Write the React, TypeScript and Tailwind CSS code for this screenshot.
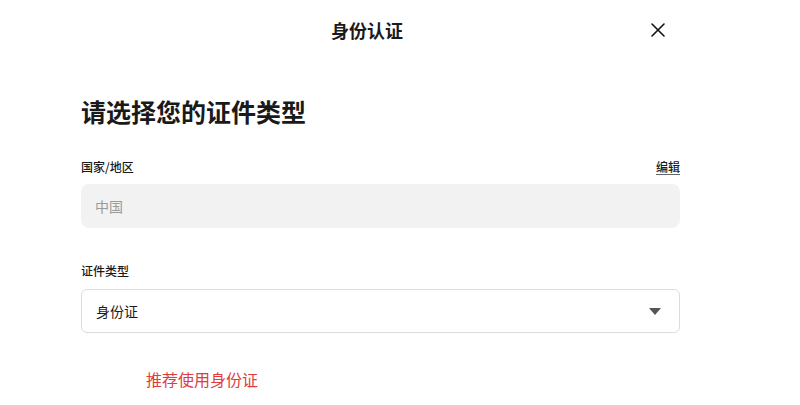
export default function App() {
  return (
    <div
      className="h-[405px] w-[800px] overflow-hidden bg-white text-[#1a1a1a]"
      style={{ fontFamily: '"Noto Sans CJK SC", "Noto Sans", sans-serif' }}
    >
      {/* Header */}
      <div className="relative flex h-[60px] items-center justify-center pr-[66px]">
        <h1 className="text-[18px] font-semibold leading-none">身份认证</h1>
        <button className="absolute left-[650px] top-[22px] flex h-4 w-4 items-center justify-center">
          <svg viewBox="0 0 16 16" className="h-[16px] w-[16px]" fill="none" stroke="#111" strokeWidth="1.6" strokeLinecap="round">
            <path d="M2 2L14 14M14 2L2 14" />
          </svg>
        </button>
      </div>

      <div className="mx-[81px] w-[599px]">
        <h2 className="mt-[36px] text-[25px] font-semibold leading-[30px]">请选择您的证件类型</h2>

        <div className="mt-[33px] flex items-center justify-between text-[12px] font-medium leading-[16px]">
          <span>国家/地区</span>
          <span className="underline decoration-[#666] underline-offset-2">编辑</span>
        </div>
        <div className="mt-[9px] flex h-[44px] items-center rounded-lg bg-[#f2f2f2] px-[14px] text-[14px] text-[#9a9a9a]">
          中国
        </div>

        <div className="mt-[35px] text-[12px] font-medium leading-[16px]">证件类型</div>
        <div className="mt-[10px] flex h-[44px] items-center justify-between rounded-md border border-[#dcdcdc] px-[14px] text-[14px]">
          <span>身份证</span>
          <svg viewBox="0 0 12 7" className="mr-[4px] h-[7px] w-[12px]">
            <path d="M0 0H12L6 7Z" fill="#555" />
          </svg>
        </div>

        <div className="mt-[35px] pl-[65px] text-[16px] leading-[22px] text-[#e03c3c]">推荐使用身份证</div>
      </div>
    </div>
  );
}
